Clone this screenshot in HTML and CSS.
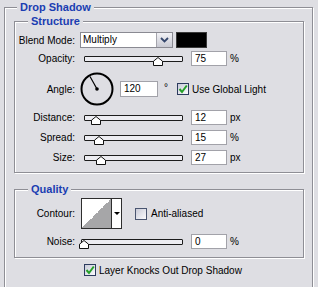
FILE: index.html
```html
<!DOCTYPE html>
<html lang="en">
<head>
  <meta charset="UTF-8" />
  <title>Drop Shadow</title>
  <link rel="stylesheet" href="styles.css">
</head>
<body>
  <fieldset class="panel">
    <legend class="panel-title">Drop Shadow</legend>

    <fieldset class="group">
      <legend class="group-title">Structure</legend>

      <div class="row row-blend">
        <span class="row-label">Blend Mode:</span>
        <div class="select">
          <span class="select-value">Multiply</span>
          <span class="select-btn">
            <svg width="9" height="6" viewBox="0 0 9 6"><polyline points="1,1 4.5,4.5 8,1" fill="none" stroke="#34466c" stroke-width="1.8"/></svg>
          </span>
        </div>
        <span class="swatch"></span>
      </div>

      <div class="row row-opacity">
        <span class="row-label">Opacity:</span>
        <div class="slider">
          <span class="slider-thumb" style="left: 68px"><svg width="10" height="9" viewBox="0 0 10 9"><polygon points="0.5,8.5 0.5,4.2 5,0.5 9.5,4.2 9.5,8.5" fill="#fff" stroke="#111"/></svg></span>
        </div>
        <span class="field">75</span>
        <span class="unit">%</span>
      </div>

      <div class="row row-angle">
        <span class="row-label">Angle:</span>
        <svg class="dial" width="34" height="34" viewBox="0 0 34 34">
          <circle cx="17" cy="17" r="15.5" fill="none" stroke="#000" stroke-width="2"/>
          <line x1="17" y1="17" x2="10" y2="4.5" stroke="#000" stroke-width="1.2"/>
          <circle cx="17" cy="17" r="1.8" fill="#000"/>
        </svg>
        <span class="field field-angle">120</span>
        <span class="degree">°</span>
        <span class="check check-global">
          <svg width="10" height="10" viewBox="0 0 10 10"><polyline points="1.5,5 4,8 8.8,1.5" fill="none" stroke="#25a028" stroke-width="2"/></svg>
        </span>
        <span class="check-text">Use Global Light</span>
      </div>

      <div class="row row-distance">
        <span class="row-label">Distance:</span>
        <div class="slider">
          <span class="slider-thumb" style="left: 6px"><svg width="10" height="9" viewBox="0 0 10 9"><polygon points="0.5,8.5 0.5,4.2 5,0.5 9.5,4.2 9.5,8.5" fill="#fff" stroke="#111"/></svg></span>
        </div>
        <span class="field">12</span>
        <span class="unit">px</span>
      </div>

      <div class="row row-spread">
        <span class="row-label">Spread:</span>
        <div class="slider">
          <span class="slider-thumb" style="left: 9px"><svg width="10" height="9" viewBox="0 0 10 9"><polygon points="0.5,8.5 0.5,4.2 5,0.5 9.5,4.2 9.5,8.5" fill="#fff" stroke="#111"/></svg></span>
        </div>
        <span class="field">15</span>
        <span class="unit">%</span>
      </div>

      <div class="row row-size">
        <span class="row-label">Size:</span>
        <div class="slider">
          <span class="slider-thumb" style="left: 11px"><svg width="10" height="9" viewBox="0 0 10 9"><polygon points="0.5,8.5 0.5,4.2 5,0.5 9.5,4.2 9.5,8.5" fill="#fff" stroke="#111"/></svg></span>
        </div>
        <span class="field">27</span>
        <span class="unit">px</span>
      </div>
    </fieldset>

    <fieldset class="group group-quality">
      <legend class="group-title">Quality</legend>

      <div class="row row-contour">
        <span class="row-label">Contour:</span>
        <div class="contour">
          <span class="contour-preview"></span>
          <span class="contour-arrow"><span class="arrow-down"></span></span>
        </div>
        <span class="check check-anti"></span>
        <span class="check-text">Anti-aliased</span>
      </div>

      <div class="row row-noise">
        <span class="row-label">Noise:</span>
        <div class="slider slider-noise">
          <span class="slider-thumb" style="left: -3px"><svg width="10" height="9" viewBox="0 0 10 9"><polygon points="0.5,8.5 0.5,4.2 5,0.5 9.5,4.2 9.5,8.5" fill="#fff" stroke="#111"/></svg></span>
        </div>
        <span class="field">0</span>
        <span class="unit">%</span>
      </div>
    </fieldset>

    <div class="row row-knockout">
      <span class="check">
        <svg width="10" height="10" viewBox="0 0 10 10"><polyline points="1.5,5 4,8 8.8,1.5" fill="none" stroke="#25a028" stroke-width="2"/></svg>
      </span>
      <span class="check-text">Layer Knocks Out Drop Shadow</span>
    </div>
  </fieldset>
</body>
</html>
```

FILE: styles.css
```css
* {
  box-sizing: border-box;
  margin: 0;
  padding: 0;
}

body {
  background: #dedee3;
  font-family: "Liberation Sans", Arial, sans-serif;
  font-size: 10px;
  color: #000;
  height: 287px;
  overflow: hidden;
}

.panel,
.group {
  border: 1px solid #8e8e95;
  box-shadow: inset 1px 1px 0 #fff, 1px 1px 0 #fff;
  min-width: 0;
}

.panel {
  margin-left: 4px;
  width: 309px;
  padding-bottom: 30px;
}

.panel-title {
  margin-left: 12px;
  padding: 0 3px;
  font-size: 11px;
  font-weight: bold;
  line-height: 15px;
  color: #1a3db2;
  background: #dedee3;
}

.group {
  margin-left: 9px;
  width: 290px;
  padding-bottom: 7px;
}

.group-title {
  margin-left: 13px;
  padding: 0 3px;
  font-size: 11px;
  font-weight: bold;
  line-height: 13px;
  color: #1a3db2;
  background: #dedee3;
}

.group-quality {
  margin-top: 10px;
  padding-bottom: 8px;
}

.row {
  display: flex;
  align-items: center;
  height: 15px;
}

.row-label {
  flex: none;
  width: 60px;
  text-align: right;
}

/* structure rows */
.row-blend {
  margin-top: 4px;
  height: 16px;
}

.row-opacity {
  margin-top: 3px;
}

.row-angle {
  margin-top: 6px;
  height: 34px;
}

.row-distance {
  margin-top: 4px;
}

.row-spread,
.row-size {
  margin-top: 5px;
}

/* quality rows */
.row-contour {
  margin-top: 2px;
  height: 31px;
}

.row-noise {
  margin-top: 5px;
}

.row-knockout {
  margin: 6px 0 0 79px;
  height: 12px;
}

.select {
  display: flex;
  width: 93px;
  height: 16px;
  margin-left: 5px;
  border: 1px solid #8a8a92;
  background: #fff;
}

.select-value {
  flex: 1;
  padding-left: 2px;
  line-height: 14px;
}

.select-btn {
  display: flex;
  align-items: center;
  justify-content: center;
  width: 16px;
  border-left: 1px solid #a4a4ac;
  background: linear-gradient(#f2f2f6, #c9cad3);
}

.swatch {
  width: 31px;
  height: 16px;
  margin-left: 3px;
  background: #000;
  border: 1px solid #3a3a3a;
}

.slider {
  position: relative;
  flex: none;
  width: 99px;
  height: 6px;
  margin-left: 9px;
  border: 1px solid #1c1c1c;
  border-radius: 1px;
  background: #ececf1;
}

.slider-noise {
  width: 102px;
  margin-left: 6px;
}

.slider-thumb {
  position: absolute;
  top: 0;
  display: block;
  width: 10px;
  height: 9px;
}

.slider-thumb svg {
  display: block;
}

.field {
  flex: none;
  width: 36px;
  height: 15px;
  margin-left: 8px;
  padding-left: 3px;
  border: 1px solid #a2a2a9;
  background: #fff;
  line-height: 13px;
}

.field-angle {
  width: 38px;
  height: 16px;
  margin-left: 6px;
  line-height: 14px;
}

.unit {
  margin-left: 3px;
}

.dial {
  flex: none;
  margin-left: 5px;
}

.degree {
  margin: 0 0 4px 6px;
}

.check {
  display: flex;
  align-items: center;
  justify-content: center;
  flex: none;
  width: 12px;
  height: 12px;
  border: 1px solid #2c3b5e;
  background: linear-gradient(135deg, #c9cbd8, #fbfbfd);
}

.check-global {
  margin-left: 9px;
}

.check-anti {
  margin-left: 13px;
  border-color: #4a5570;
}

.check-text {
  margin-left: 3px;
}

.check-anti + .check-text {
  margin-left: 4px;
}

.contour {
  display: flex;
  flex: none;
  width: 41px;
  height: 31px;
  margin-left: 6px;
  border: 1px solid #2e2e2e;
  background: #fff;
}

.contour-preview {
  width: 30px;
  border-right: 1px solid #2e2e2e;
  background: linear-gradient(to bottom right, #fff 50%, #a6a6a8 50%);
}

.contour-arrow {
  display: flex;
  flex: 1;
  align-items: center;
  justify-content: center;
}

.arrow-down {
  border-left: 3px solid transparent;
  border-right: 3px solid transparent;
  border-top: 3px solid #000;
}
```
